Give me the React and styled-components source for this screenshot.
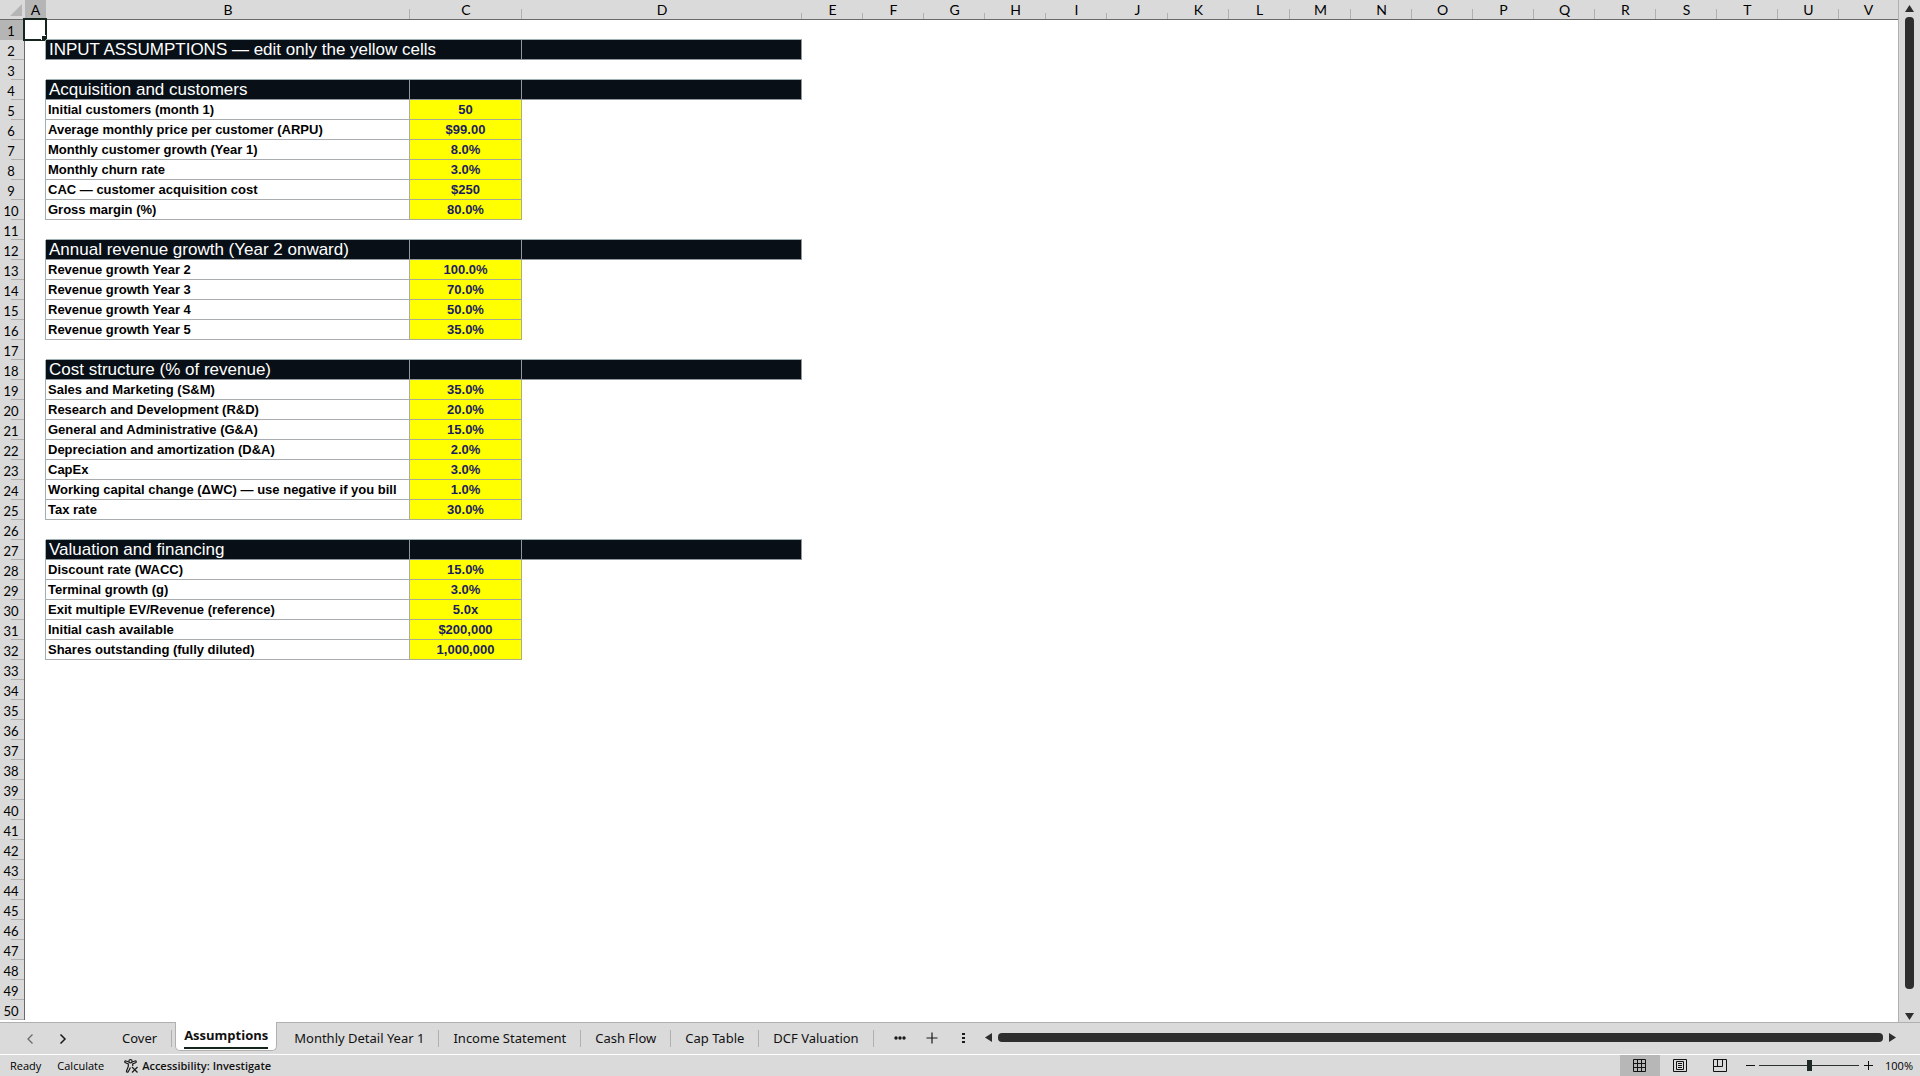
import React from "react";
import styled, { createGlobalStyle } from "styled-components";

const GlobalStyle = createGlobalStyle`
    * {
        box-sizing: border-box;
    }
    body {
        margin: 0;
        background: #dadada;
        overflow: hidden;
    }
`;

const uiFont = `"Open Sans", "Noto Sans", sans-serif`;
const tabFont = `"Noto Sans", "Open Sans", sans-serif`;
const cellFont = `"Liberation Sans", Arial, sans-serif`;

const Workbook = styled.div`
    display: flex;
    flex-direction: column;
    height: 100vh;
    background: #dadada;
    color: #000;
    font-family: ${uiFont};
`;

const SheetArea = styled.main`
    flex: 1;
    min-height: 0;
    display: flex;
    border-bottom: 1px solid #b0b0b0;
`;

const SheetPane = styled.div`
    flex: 1;
    min-width: 0;
    overflow: hidden;
    background: #fff;
    border-right: 1px solid #b0b0b0;
`;

const Sheet = styled.table`
    width: 100%;
    table-layout: fixed;
    border-collapse: separate;
    border-spacing: 0;
    font-family: ${cellFont};
`;

const Column = styled.col`
    width: ${(props) => (props.$width ? `${props.$width}px` : "auto")};
`;

const Corner = styled.td`
    height: 20px;
    padding: 0 3px 3px 0;
    background: #dadada;
    border-bottom: 1px solid #6a6a6a;
    line-height: 0;
    text-align: right;
    vertical-align: bottom;
`;

const ColumnHeader = styled.th`
    height: 20px;
    padding: 1px 0;
    border-bottom: 1px solid #6a6a6a;
    background: ${(props) =>
        props.$active
            ? "#b5b5b5"
            : `linear-gradient(#b0b0b0, #b0b0b0) right bottom / 1px ${props.$tick}px no-repeat #dadada`};
    font: 400 14px/17px Lato, sans-serif;
    color: #000;
`;

const RowHeader = styled.th`
    height: 20px;
    padding: 2px 2px 0 0;
    border-right: 1px solid #6a6a6a;
    background: ${(props) =>
        props.$active
            ? "#b5b5b5"
            : "linear-gradient(#b0b0b0, #b0b0b0) right bottom / 13px 1px no-repeat #dadada"};
    font: 400 13px/18px Lato, sans-serif;
    color: #000;
`;

const Cell = styled.td`
    position: relative;
    height: 20px;
    padding: 0;
`;

const Selection = styled.div`
    position: absolute;
    inset: -2px -1px -1px -2px;
    border: 2px solid #14261c;

    &::after {
        content: "";
        position: absolute;
        right: -2px;
        bottom: -2px;
        width: 5px;
        height: 5px;
        background: #14261c;
        box-shadow: -1px -1px 0 #fff;
    }
`;

const BandCell = styled.td`
    height: 20px;
    padding: 0 0 0 3px;
    background: #080f17;
    border-right: 1px solid #8f979c;
    border-bottom: 1px solid #8f979c;
    color: #fff;
    font-size: 17px;
    line-height: 19px;
    white-space: nowrap;
`;

const LabelCell = styled.td`
    height: 20px;
    padding: 1px 0 0 2px;
    border-right: 1px solid #a9adb0;
    border-bottom: 1px solid #a9adb0;
    overflow: hidden;
    font-size: 13px;
    font-weight: 700;
    line-height: 18px;
    color: #000;
    white-space: nowrap;
`;

const InputCell = styled.td`
    height: 20px;
    padding: 1px 0 0;
    background: #ffff00;
    border-right: 1px solid #a9ad90;
    border-bottom: 1px solid #a9ad90;
    font-size: 13px;
    font-weight: 700;
    line-height: 18px;
    color: #1c1c60;
    text-align: center;
`;

// closes the left and top edge of a block from the neighbouring empty cell
const EdgeCell = styled(Cell)`
    border-right: ${(props) => (props.$right ? "1px solid #9db0b4" : "0")};
    border-bottom: ${(props) => (props.$bottom ? "1px solid #9db0b4" : "0")};
`;

const VerticalScroll = styled.div`
    width: 21px;
    display: flex;
    flex-direction: column;
    align-items: center;
    gap: 5px;
    padding: 5px 0 2px;
`;

const VerticalThumb = styled.div`
    width: 9px;
    flex: 1;
    margin-bottom: 19px;
    border-radius: 4px;
    background: #2e2e2e;
`;

const IconButton = styled.button`
    display: flex;
    align-items: center;
    justify-content: center;
    width: ${(props) => props.$width || 9}px;
    height: ${(props) => props.$height || 7}px;
    padding: 0;
    border: 0;
    background: ${(props) => (props.$active ? "#b7b7b7" : "transparent")};
    color: #1a1a1a;
`;

const TabBar = styled.nav`
    display: flex;
    height: 32px;
    border-bottom: 1px solid #fff;
`;

const TabNav = styled.div`
    display: flex;
    align-items: center;
    gap: 13px;
    width: 108px;
    padding-left: 20px;
`;

const Tab = styled.button`
    align-self: flex-start;
    height: 30px;
    padding: 0 15px 0 14px;
    border: 0;
    background: linear-gradient(#b0b0b0, #b0b0b0) right 7px / 1px 17px no-repeat;
    color: #111;
    font: 400 13px/30px ${tabFont};
    white-space: nowrap;
`;

const ActiveTab = styled.button`
    align-self: flex-start;
    height: 29px;
    margin: -1px 3px 0;
    padding: 0 8px;
    border: 1px solid #b0b0b0;
    border-top: 0;
    border-radius: 0 0 5px 5px;
    background: #fff;
    color: #111;
    font: 700 13px/23px ${uiFont};
`;

const TabLabel = styled.span`
    display: block;
    border-bottom: 2px solid #14261c;
`;

const TabTools = styled.div`
    display: flex;
    align-items: center;
    gap: 20px;
    padding: 0 15px 2px 20px;
`;

const HorizontalScroll = styled.div`
    flex: 1;
    display: flex;
    align-items: center;
    gap: 6px;
    padding: 0 24px 2px 0;
`;

const HorizontalThumb = styled.div`
    flex: 1;
    height: 9px;
    border-radius: 4px;
    background: #2e2e2e;
`;

const StatusBar = styled.footer`
    display: flex;
    align-items: center;
    height: 21px;
    padding: 0 7px 0 10px;
    font-size: 11px;
    line-height: 20px;
`;

const StatusText = styled.span`
    margin-right: 16px;
`;

const Accessibility = styled.button`
    display: flex;
    align-items: center;
    gap: 4px;
    margin-left: 4px;
    padding: 0;
    border: 0;
    background: none;
    color: #111;
    font: 600 11px/18px ${uiFont};
`;

const Views = styled.div`
    display: flex;
    margin-left: auto;
`;

const Zoom = styled.div`
    display: flex;
    align-items: center;
    gap: 4px;
    margin: 0 12px 0 5px;
`;

const ZoomSlider = styled.input`
    appearance: none;
    width: 100px;
    height: 11px;
    margin: 0;
    background: linear-gradient(#2a332f, #2a332f) center / 100% 1px no-repeat;

    &::-webkit-slider-thumb {
        appearance: none;
        width: 5px;
        height: 11px;
        background: #1e2a26;
    }
`;

const columns = "ABCDEFGHIJKLMNOPQRSTUV".split("");
const columnWidths = { A: 21, B: 364, C: 112, D: 280, V: 0 };
const shortTicks = "DEFGHIJ";

function tickHeight(name) {
    if (name === "B" || name === "C") return 10;
    if (name === "V") return 0;
    return shortTicks.includes(name) ? 6 : 10;
}

const bands = {
    4: "Acquisition and customers",
    12: "Annual revenue growth (Year 2 onward)",
    18: "Cost structure (% of revenue)",
    27: "Valuation and financing",
};

const inputs = {
    5: ["Initial customers (month 1)", "50"],
    6: ["Average monthly price per customer (ARPU)", "$99.00"],
    7: ["Monthly customer growth (Year 1)", "8.0%"],
    8: ["Monthly churn rate", "3.0%"],
    9: ["CAC — customer acquisition cost", "$250"],
    10: ["Gross margin (%)", "80.0%"],
    13: ["Revenue growth Year 2", "100.0%"],
    14: ["Revenue growth Year 3", "70.0%"],
    15: ["Revenue growth Year 4", "50.0%"],
    16: ["Revenue growth Year 5", "35.0%"],
    19: ["Sales and Marketing (S&M)", "35.0%"],
    20: ["Research and Development (R&D)", "20.0%"],
    21: ["General and Administrative (G&A)", "15.0%"],
    22: ["Depreciation and amortization (D&A)", "2.0%"],
    23: ["CapEx", "3.0%"],
    24: ["Working capital change (ΔWC) — use negative if you bill", "1.0%"],
    25: ["Tax rate", "30.0%"],
    28: ["Discount rate (WACC)", "15.0%"],
    29: ["Terminal growth (g)", "3.0%"],
    30: ["Exit multiple EV/Revenue (reference)", "5.0x"],
    31: ["Initial cash available", "$200,000"],
    32: ["Shares outstanding (fully diluted)", "1,000,000"],
};

const tabsAfter = [
    "Monthly Detail Year 1",
    "Income Statement",
    "Cash Flow",
    "Cap Table",
    "DCF Valuation",
];

function Arrow({ direction }) {
    const points = {
        up: "4.5,0 9,7 0,7",
        down: "0,0 9,0 4.5,7",
        left: "7,0 7,9 0,4.5",
        right: "0,0 7,4.5 0,9",
    };
    const upright = direction === "up" || direction === "down";
    return (
        <svg width={upright ? 9 : 7} height={upright ? 7 : 9}>
            <polygon points={points[direction]} fill="#2e2e2e" />
        </svg>
    );
}

function SheetRow({ number }) {
    const filled = number === 2 || bands[number] || inputs[number];
    const opensBlock = number === 1 || bands[number + 1];

    return (
        <tr>
            <RowHeader scope="row" $active={number === 1}>
                {number}
            </RowHeader>
            <EdgeCell $right={filled}>{number === 1 && <Selection />}</EdgeCell>
            {number === 2 && (
                <>
                    <BandCell colSpan={2}>
                        INPUT ASSUMPTIONS — edit only the yellow cells
                    </BandCell>
                    <BandCell />
                </>
            )}
            {bands[number] && (
                <>
                    <BandCell>{bands[number]}</BandCell>
                    <BandCell />
                    <BandCell />
                </>
            )}
            {inputs[number] && (
                <>
                    <LabelCell>{inputs[number][0]}</LabelCell>
                    <InputCell>{inputs[number][1]}</InputCell>
                    <Cell />
                </>
            )}
            {!filled && <EdgeCell colSpan={3} $bottom={opensBlock} />}
            <Cell colSpan={18} />
        </tr>
    );
}

export default function App() {
    const rows = Array.from({ length: 50 }, (_, index) => index + 1);

    return (
        <Workbook>
            <GlobalStyle />
            <SheetArea>
                <SheetPane>
                    <Sheet>
                        <colgroup>
                            <Column $width={25} />
                            {columns.map((name) => (
                                <Column key={name} $width={columnWidths[name] ?? 61} />
                            ))}
                        </colgroup>
                        <thead>
                            <tr>
                                <Corner>
                                    <svg width="12" height="12">
                                        <polygon points="12,0 12,12 0,12" fill="#b5b5b5" />
                                    </svg>
                                </Corner>
                                {columns.map((name) => (
                                    <ColumnHeader
                                        key={name}
                                        scope="col"
                                        $active={name === "A"}
                                        $tick={tickHeight(name)}>
                                        {name}
                                    </ColumnHeader>
                                ))}
                            </tr>
                        </thead>
                        <tbody>
                            {rows.map((number) => (
                                <SheetRow key={number} number={number} />
                            ))}
                        </tbody>
                    </Sheet>
                </SheetPane>
                <VerticalScroll>
                    <IconButton aria-label="Scroll up">
                        <Arrow direction="up" />
                    </IconButton>
                    <VerticalThumb />
                    <IconButton aria-label="Scroll down">
                        <Arrow direction="down" />
                    </IconButton>
                </VerticalScroll>
            </SheetArea>

            <TabBar>
                <TabNav>
                    <IconButton $width={20} $height={20} aria-label="Previous sheet">
                        <svg width="8" height="10" fill="none" stroke="#6a6a6a" strokeWidth="1.3">
                            <path d="M6.5 0.5 2 5l4.5 4.5" />
                        </svg>
                    </IconButton>
                    <IconButton $width={20} $height={20} aria-label="Next sheet">
                        <svg width="8" height="10" fill="none" stroke="#1a1a1a" strokeWidth="1.5">
                            <path d="M1.5 0.5 6 5 1.5 9.5" />
                        </svg>
                    </IconButton>
                </TabNav>
                <Tab>Cover</Tab>
                <ActiveTab>
                    <TabLabel>Assumptions</TabLabel>
                </ActiveTab>
                {tabsAfter.map((name) => (
                    <Tab key={name}>{name}</Tab>
                ))}
                <TabTools>
                    <IconButton $width={12} $height={12} aria-label="More sheets">
                        <svg width="12" height="4" fill="#1a1a1a">
                            <circle cx="2" cy="2" r="1.7" />
                            <circle cx="6" cy="2" r="1.7" />
                            <circle cx="10" cy="2" r="1.7" />
                        </svg>
                    </IconButton>
                    <IconButton $width={12} $height={12} aria-label="New sheet">
                        <svg width="12" height="12" stroke="#1a1a1a" strokeWidth="1.2">
                            <path d="M6 0.5v11M0.5 6h11" />
                        </svg>
                    </IconButton>
                    <IconButton $width={12} $height={12} aria-label="Resize tabs">
                        <svg width="3" height="12" fill="#1a1a1a">
                            <path d="M0 1h3v2H0zM0 5h3v2H0zM0 9h3v2H0z" />
                        </svg>
                    </IconButton>
                </TabTools>
                <HorizontalScroll>
                    <IconButton $width={7} $height={9} aria-label="Scroll left">
                        <Arrow direction="left" />
                    </IconButton>
                    <HorizontalThumb />
                    <IconButton $width={7} $height={9} aria-label="Scroll right">
                        <Arrow direction="right" />
                    </IconButton>
                </HorizontalScroll>
            </TabBar>

            <StatusBar>
                <StatusText>Ready</StatusText>
                <StatusText>Calculate</StatusText>
                <Accessibility>
                    <svg width="14" height="14" fill="none" stroke="#1a1a1a" strokeWidth="1.2">
                        <circle cx="6.5" cy="2.3" r="1.6" />
                        <path d="M5 3 2 2C.6 1.7.3 3.3 1.5 3.8L4.3 5v2.5L2.5 12c-.3 1.3 1.2 1.6 1.7.7L6.5 8.5M8 3l3-1c1.4-.3 1.7 1.3.5 1.8L8.7 5v2M8 8l5.5 5.5M13.5 8 8 13.5" />
                    </svg>
                    Accessibility: Investigate
                </Accessibility>
                <Views>
                    <IconButton $width={40} $height={21} $active aria-label="Normal view">
                        <svg width="14" height="14" fill="none" stroke="#111">
                            <path d="M.5.5h12v12H.5zM.5 4.5h12M.5 8.5h12M4.5.5v12M8.5.5v12" />
                        </svg>
                    </IconButton>
                    <IconButton $width={40} $height={21} aria-label="Page layout">
                        <svg width="14" height="14" fill="none" stroke="#111">
                            <path d="M.5.5h13v12H.5zM3.5 2.5h7v8h-7zM5 4.5h4M5 6.5h4M5 8.5h4" />
                        </svg>
                    </IconButton>
                    <IconButton $width={40} $height={21} aria-label="Page break preview">
                        <svg width="14" height="14" fill="none" stroke="#111">
                            <path d="M.5.5h13v12H.5zM4.5.5v7M9.5.5v7H.5" />
                        </svg>
                    </IconButton>
                </Views>
                <Zoom>
                    <IconButton $width={10} $height={10} aria-label="Zoom out">
                        <svg width="9" height="9" stroke="#111">
                            <path d="M0 4.5h9" />
                        </svg>
                    </IconButton>
                    <ZoomSlider type="range" min="0" max="100" defaultValue="50" aria-label="Zoom" />
                    <IconButton $width={10} $height={10} aria-label="Zoom in">
                        <svg width="9" height="9" stroke="#111">
                            <path d="M0 4.5h9M4.5 0v9" />
                        </svg>
                    </IconButton>
                </Zoom>
                <span>100%</span>
            </StatusBar>
        </Workbook>
    );
}
